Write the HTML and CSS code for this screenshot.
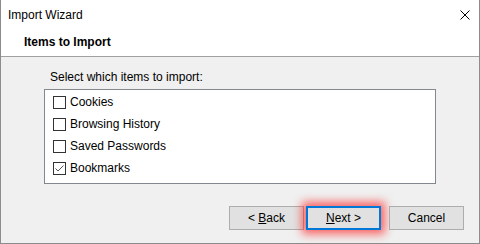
FILE: index.html
```html
<!DOCTYPE html>
<html lang="en">
<head>
  <meta charset="UTF-8">
  <title>Import Wizard</title>
  <link rel="stylesheet" href="styles.css">
</head>
<body>
  <div class="window">
    <div class="header">
      <div class="titlebar">
        <span>Import Wizard</span>
        <svg class="close" width="10" height="10" viewBox="0 0 10 10">
          <path d="M0.5 0.5 L9.5 9.5 M9.5 0.5 L0.5 9.5" stroke="#000" stroke-width="1" fill="none"/>
        </svg>
      </div>
      <div class="heading">Items to Import</div>
    </div>

    <div class="content">
      <div class="prompt">Select which items to import:</div>
      <div class="list">
        <label class="item"><span class="box"></span>Cookies</label>
        <label class="item"><span class="box"></span>Browsing History</label>
        <label class="item"><span class="box"></span>Saved Passwords</label>
        <label class="item">
          <span class="box">
            <svg width="11" height="11" viewBox="0 0 11 11">
              <path d="M1.5 5.5 L4 8 L9.5 2.5" stroke="#555" stroke-width="1" fill="none"/>
            </svg>
          </span>Bookmarks
        </label>
      </div>
    </div>

    <div class="footer">
      <button class="btn">&lt; <u>B</u>ack</button>
      <button class="btn btn-default"><u>N</u>ext &gt;</button>
      <button class="btn btn-cancel">Cancel</button>
    </div>
  </div>
</body>
</html>
```

FILE: styles.css
```css
body {
  margin: 0;
  font-family: "Liberation Sans", Arial, sans-serif;
  font-size: 12px;
  color: #000;
}

.window {
  width: 480px;
  height: 244px;
  box-sizing: border-box;
  border: 1px solid #8c8c8c;
  border-top: none;
  background-color: #f0f0f0;
  display: flex;
  flex-direction: column;
}

.header {
  background-color: #fff;
  height: 56px;
  border-bottom: 1px solid #a0a0a0;
}

.titlebar {
  height: 29px;
  padding: 0 9px 0 7px;
  display: flex;
  align-items: center;
  justify-content: space-between;
}

.heading {
  padding-left: 23px;
  font-weight: bold;
  line-height: 27px;
}

.content {
  padding: 13px 0 0 43px;
}

.prompt {
  padding-left: 6px;
  line-height: 15px;
  margin-bottom: 4px;
}

.list {
  width: 392px;
  height: 95px;
  box-sizing: border-box;
  border: 1px solid #828790;
  background-color: #fff;
  padding: 1px 0 0 8px;
}

.item {
  display: flex;
  align-items: center;
  height: 22px;
}

.box {
  width: 13px;
  height: 13px;
  box-sizing: border-box;
  border: 1px solid #333;
  background-color: #fff;
  margin-right: 4px;
  display: flex;
  align-items: center;
  justify-content: center;
}

.footer {
  margin-top: auto;
  padding: 0 15px 13px 0;
  display: flex;
  justify-content: flex-end;
}

.btn {
  width: 75px;
  height: 24px;
  box-sizing: border-box;
  border: 1px solid #adadad;
  background-color: #e1e1e1;
  font-family: inherit;
  font-size: 12px;
  color: #000;
  padding: 0;
}

.btn u {
  text-decoration: underline;
}

.btn-default {
  margin-left: 2px;
  border: 2px solid #0078d7;
  box-shadow: 0 0 10px 4px rgba(255, 0, 0, 0.6);
}

.btn-cancel {
  margin-left: 8px;
}
```
